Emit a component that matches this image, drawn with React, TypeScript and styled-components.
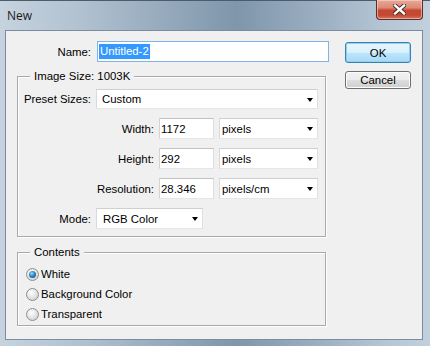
import React from "react";
import styled, { createGlobalStyle } from "styled-components";

const Global = createGlobalStyle`
  html, body { margin: 0; padding: 0; }
  body {
    width: 430px; height: 346px; overflow: hidden;
    background: #8fa6bb;
    font-family: "Liberation Sans", Arial, sans-serif;
    font-size: 11.4px;
    color: #000;
  }
`;

const Window = styled.div`
  width: 430px;
  height: 346px;
  box-sizing: border-box;
  display: flex;
  flex-direction: column;
  padding: 0 7px 6px 5px;
  border-top: 1px solid #4e5c69;
  background: linear-gradient(90deg, #c6d3df 0%, #b2c2d1 18%, #93a8bb 40%, #7f96ab 55%, #98acbf 72%, #b6c6d5 90%, #c2d0dd 100%);
`;

const TitleBar = styled.div`
  height: 29px;
  display: flex;
  align-items: flex-start;
  justify-content: space-between;
  flex-shrink: 0;
`;

const Title = styled.div`
  padding: 7px 0 0 2px;
  font-family: "Open Sans", "Liberation Sans", sans-serif;
  font-size: 12px;
  line-height: 16px;
  color: #1b1b1b;
`;

const CloseButton = styled.div`
  width: 47px;
  height: 20px;
  margin-top: -1px;
  box-sizing: border-box;
  display: flex;
  align-items: center;
  justify-content: center;
  border: 1px solid #5d2d28;
  border-top: none;
  border-radius: 0 0 4px 4px;
  background: linear-gradient(180deg, #e8a898 0%, #dc8a78 40%, #c7472f 55%, #c24a36 80%, #d8745f 100%);
  box-shadow: inset 0 0 0 1px rgba(255, 220, 210, 0.55);
`;

const Client = styled.div`
  flex: 1;
  display: flex;
  box-sizing: border-box;
  padding: 10px 0 0 11px;
  background: #f0f0f0;
  border: 1px solid #7a8da0;
`;

const LeftCol = styled.div`
  width: 312px;
  display: flex;
  flex-direction: column;
`;

const RightCol = styled.div`
  width: 66px;
  margin-left: 16px;
  padding-top: 1px;
  display: flex;
  flex-direction: column;
  gap: 8px;
`;

const Row = styled.div<{ $h?: number }>`
  display: flex;
  align-items: center;
  gap: 5px;
  height: ${(p) => p.$h ?? 21}px;
`;

const Label = styled.div<{ $w: number }>`
  width: ${(p) => p.$w}px;
  text-align: right;
  white-space: nowrap;
  flex-shrink: 0;
`;

const NameInput = styled.div`
  width: 232px;
  height: 21px;
  margin-left: 1px;
  box-sizing: border-box;
  border: 1px solid #7eb4ea;
  background: #fff;
  display: flex;
  align-items: center;
  padding-left: 1px;
`;

const Selected = styled.span`
  background: #3399ff;
  color: #fff;
  line-height: 15px;
  padding: 0 1px;
`;

const TextBox = styled.div`
  width: 55px;
  height: 21px;
  box-sizing: border-box;
  border: 1px solid;
  border-color: #c2c2c2 #dedede #e6e6e6 #d4d4d4;
  background: #fff;
  display: flex;
  align-items: center;
  padding-left: 1px;
`;

const SelectBox = styled.div<{ $w: number; $h?: number; $pad: number }>`
  width: ${(p) => p.$w}px;
  height: ${(p) => p.$h ?? 21}px;
  box-sizing: border-box;
  border: 1px solid;
  border-color: #cfcfcf #e0e0e0 #e6e6e6 #dadada;
  background: #fff;
  display: flex;
  align-items: center;
  justify-content: space-between;
  padding: 0 4px 0 ${(p) => p.$pad}px;
`;

const Arrow = styled.span`
  width: 0;
  height: 0;
  border-left: 3.5px solid transparent;
  border-right: 3.5px solid transparent;
  border-top: 4px solid #000;
  margin-top: 1px;
`;

const Group = styled.div<{ $mt: number; $pt: number; $pb: number; $pl: number; $gap: number }>`
  position: relative;
  width: 309px;
  box-sizing: border-box;
  margin-top: ${(p) => p.$mt}px;
  padding: ${(p) => p.$pt}px 7px ${(p) => p.$pb}px ${(p) => p.$pl}px;
  border: 1px solid #a9a9a9;
  box-shadow: inset 1px 1px 0 #fff, 1px 1px 0 #fff;
  display: flex;
  flex-direction: column;
  gap: ${(p) => p.$gap}px;
`;

const Legend = styled.div`
  position: absolute;
  top: -8px;
  left: 12px;
  padding: 0 4px;
  background: #f0f0f0;
  line-height: 14px;
  white-space: nowrap;
`;

const Button = styled.div<{ $primary?: boolean; $h: number }>`
  height: ${(p) => p.$h}px;
  box-sizing: border-box;
  display: flex;
  align-items: center;
  justify-content: center;
  border-radius: 3px;
  border: 1px solid ${(p) => (p.$primary ? "#3c7fb1" : "#707070")};
  background: ${(p) =>
    p.$primary
      ? "linear-gradient(180deg, #eaf6fd 0%, #d9f0fc 50%, #bee6fd 51%, #a7d9f5 100%)"
      : "linear-gradient(180deg, #f2f2f2 0%, #ebebeb 50%, #dddddd 51%, #cfcfcf 100%)"};
  box-shadow: inset 0 0 0 1px ${(p) => (p.$primary ? "#8fd0f5" : "#fcfcfc")};
  color: #000;
`;

const RadioRow = styled.div`
  display: flex;
  align-items: center;
  height: 20px;
  gap: 2px;
`;

const RadioCircle = styled.span<{ $on?: boolean }>`
  width: 13px;
  height: 13px;
  box-sizing: border-box;
  border-radius: 50%;
  border: 1px solid #8c8f91;
  background: radial-gradient(circle at 40% 35%, #ffffff 0%, #e6e6e6 45%, #c9c9c9 100%);
  display: flex;
  align-items: center;
  justify-content: center;
  &::after {
    content: "";
    display: ${(p) => (p.$on ? "block" : "none")};
    width: 7px;
    height: 7px;
    border-radius: 50%;
    background: radial-gradient(circle at 40% 35%, #a6dcf7 0%, #2a86c6 45%, #0e4a7a 100%);
  }
`;

const dims = [
  { label: "Width:", value: "1172", unit: "pixels" },
  { label: "Height:", value: "292", unit: "pixels" },
  { label: "Resolution:", value: "28.346", unit: "pixels/cm" },
];

const radios = [
  { label: "White", on: true },
  { label: "Background Color", on: false },
  { label: "Transparent", on: false },
];

export default function App() {
  return (
    <>
      <Global />
      <Window>
        <TitleBar>
          <Title>New</Title>
          <CloseButton>
            <svg width="13" height="11" viewBox="0 0 13 11">
              <path d="M2 1.5 L11 9.5 M11 1.5 L2 9.5" stroke="#3b2420" strokeWidth="4.2" strokeLinecap="square" />
              <path d="M2 1.5 L11 9.5 M11 1.5 L2 9.5" stroke="#ffffff" strokeWidth="2.4" strokeLinecap="square" />
            </svg>
          </CloseButton>
        </TitleBar>
        <Client>
          <LeftCol>
            <Row>
              <Label $w={74}>Name:</Label>
              <NameInput>
                <Selected>Untitled-2</Selected>
              </NameInput>
            </Row>
            <Group $mt={14} $pt={12} $pb={7} $pl={0} $gap={9}>
              <Legend>Image Size: 1003K</Legend>
              <Row $h={20}>
                <Label $w={73}>Preset Sizes:</Label>
                <SelectBox $w={222} $h={20} $pad={5}>
                  <span>Custom</span>
                  <Arrow />
                </SelectBox>
              </Row>
              {dims.map((d) => (
                <Row key={d.label}>
                  <Label $w={136}>{d.label}</Label>
                  <TextBox>{d.value}</TextBox>
                  <SelectBox $w={99} $pad={2}>
                    <span>{d.unit}</span>
                    <Arrow />
                  </SelectBox>
                </Row>
              ))}
              <Row>
                <Label $w={73}>Mode:</Label>
                <SelectBox $w={107} $pad={6}>
                  <span>RGB Color</span>
                  <Arrow />
                </SelectBox>
              </Row>
            </Group>
            <Group $mt={15} $pt={11} $pb={1} $pl={8} $gap={0}>
              <Legend>Contents</Legend>
              {radios.map((r) => (
                <RadioRow key={r.label}>
                  <RadioCircle $on={r.on} />
                  <span>{r.label}</span>
                </RadioRow>
              ))}
            </Group>
          </LeftCol>
          <RightCol>
            <Button $primary $h={21}>OK</Button>
            <Button $h={18}>Cancel</Button>
          </RightCol>
        </Client>
      </Window>
    </>
  );
}
